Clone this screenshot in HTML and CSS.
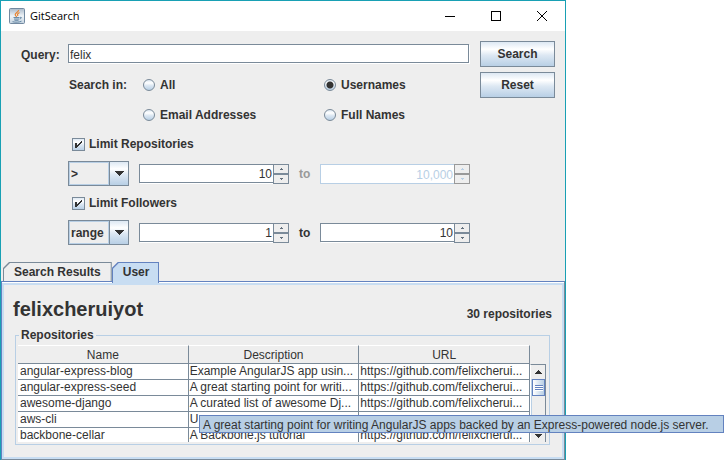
FILE: index.html
```html
<!DOCTYPE html>
<html lang="en">
<head>
<meta charset="utf-8">
<title>GitSearch</title>
<link rel="stylesheet" href="styles.css">
</head>
<body>
<svg class="defs" aria-hidden="true">
  <defs>
    <symbol id="down" viewBox="0 0 10 5"><path d="M0 0h10L5 5z"/></symbol>
    <symbol id="up" viewBox="0 0 8 4"><path d="M0 4h8L4 0z"/></symbol>
    <symbol id="step-up" viewBox="0 0 3 2"><path d="M0 1h3v1H0zM1 0h1v1H1z"/></symbol>
    <symbol id="step-down" viewBox="0 0 3 2"><path d="M0 0h3v1H0zM1 1h1v1H1z"/></symbol>
    <symbol id="tick" viewBox="0 0 13 13"><path d="M3 5h2v5H3zM5 7h1v2H5zM6 6h1v2H6zM7 5h1v2H7zM8 4h1v2H8zM9 3h1v2H9z"/></symbol>
  </defs>
</svg>
<main class="window">
  <header class="titlebar">
    <svg class="app-icon" viewBox="0 0 16 16" aria-hidden="true">
      <defs><linearGradient id="tile" x2="0" y2="1"><stop offset="0" stop-color="#a9b9c9"/><stop offset=".5" stop-color="#eef3f7"/><stop offset="1" stop-color="#c3d2df"/></linearGradient></defs>
      <rect x=".5" y=".5" width="15" height="15" rx="1" fill="url(#tile)" stroke="#7289a0"/>
      <path d="M9.500 2C10 4 6 5 6.200 6.800 6.300 7.800 7.500 8 7.500 9M10.500 4.500C8.500 5.500 8 6.500 9 8" fill="none" stroke="#e8822d" stroke-width="1.200"/>
      <path d="M4.500 9.500h6M11 9.500c2-.8 2 1-.5 1.500M5 11h5M5.500 12.300h4M3.500 13.700c3 .8 7 .5 9-.5" fill="none" stroke="#4b7396" stroke-width=".8"/>
    </svg>
    <h1 class="title">GitSearch</h1>
    <button class="win-btn" aria-label="Minimize"><svg width="10" height="10" viewBox="0 0 10 10"><path d="M0 5.500h10"/></svg></button>
    <button class="win-btn" aria-label="Maximize"><svg width="10" height="10" viewBox="0 0 10 10"><path d="M.5.5h9v9h-9z"/></svg></button>
    <button class="win-btn" aria-label="Close"><svg width="10" height="10" viewBox="0 0 10 10"><path d="M0 0l10 10M10 0L0 10"/></svg></button>
  </header>

  <form class="form">
    <label class="query-label" for="query">Query:</label>
    <div class="fields">
      <input class="text query" id="query" type="text" value="felix">
      <div class="scope" role="radiogroup" aria-labelledby="scope-label">
        <span class="scope-label" id="scope-label">Search in:</span>
        <label class="option"><input type="radio" name="scope">All</label>
        <label class="option"><input type="radio" name="scope" checked>Usernames</label>
        <label class="option second"><input type="radio" name="scope">Email Addresses</label>
        <label class="option"><input type="radio" name="scope">Full Names</label>
      </div>
      <label class="limit"><span class="check"><input type="checkbox" checked><svg><use href="#tick"/></svg></span>Limit Repositories</label>
      <div class="range">
        <span class="combo"><select aria-label="Repository comparison"><option>&gt;</option><option>range</option></select><span class="combo-btn"><svg width="10" height="5"><use href="#down"/></svg></span></span>
        <span class="spinner"><input class="text" type="text" value="10" aria-label="Repositories from"><button type="button" aria-label="Increase"><svg width="3" height="2"><use href="#step-up"/></svg></button><button type="button" aria-label="Decrease"><svg width="3" height="2"><use href="#step-down"/></svg></button></span>
        <span class="to off">to</span>
        <span class="spinner off"><input class="text" type="text" value="10,000" aria-label="Repositories to" disabled><button type="button" aria-label="Increase" disabled><svg width="3" height="2"><use href="#step-up"/></svg></button><button type="button" aria-label="Decrease" disabled><svg width="3" height="2"><use href="#step-down"/></svg></button></span>
      </div>
      <label class="limit"><span class="check"><input type="checkbox" checked><svg><use href="#tick"/></svg></span>Limit Followers</label>
      <div class="range">
        <span class="combo"><select aria-label="Follower comparison"><option>range</option><option>&gt;</option></select><span class="combo-btn"><svg width="10" height="5"><use href="#down"/></svg></span></span>
        <span class="spinner"><input class="text" type="text" value="1" aria-label="Followers from"><button type="button" aria-label="Increase"><svg width="3" height="2"><use href="#step-up"/></svg></button><button type="button" aria-label="Decrease"><svg width="3" height="2"><use href="#step-down"/></svg></button></span>
        <span class="to">to</span>
        <span class="spinner"><input class="text" type="text" value="10" aria-label="Followers to"><button type="button" aria-label="Increase"><svg width="3" height="2"><use href="#step-up"/></svg></button><button type="button" aria-label="Decrease"><svg width="3" height="2"><use href="#step-down"/></svg></button></span>
      </div>
    </div>
    <div class="actions">
      <button class="push" type="button">Search</button>
      <button class="push" type="reset">Reset</button>
    </div>
  </form>

  <div class="tabs" role="tablist">
    <button class="tab" role="tab" aria-selected="false">Search Results</button>
    <button class="tab active" role="tab" aria-selected="true">User</button>
  </div>
  <section class="panel" role="tabpanel">
    <div class="user">
      <h2 class="name">felixcheruiyot</h2>
      <span class="count">30 repositories</span>
    </div>
    <fieldset class="repos">
      <legend>Repositories</legend>
      <div class="scroll">
        <table>
          <thead><tr><th>Name</th><th>Description</th><th>URL</th></tr></thead>
          <tbody>
            <tr><td>angular-express-blog</td><td>Example AngularJS app usin...</td><td>https://github.com/felixcherui...</td></tr>
            <tr><td>angular-express-seed</td><td>A great starting point for writi...</td><td>https://github.com/felixcherui...</td></tr>
            <tr><td>awesome-django</td><td>A curated list of awesome Dj...</td><td>https://github.com/felixcherui...</td></tr>
            <tr><td>aws-cli</td><td>U</td><td></td></tr>
            <tr><td>backbone-cellar</td><td>A Backbone.js tutorial</td><td>https://github.com/felixcherui...</td></tr>
          </tbody>
        </table>
        <div class="scrollbar">
          <button class="arrow" aria-label="Scroll up"><svg width="8" height="4"><use href="#up"/></svg></button>
          <div class="track"><div class="thumb"></div></div>
          <button class="arrow" aria-label="Scroll down"><svg width="8" height="4"><use href="#down"/></svg></button>
        </div>
      </div>
    </fieldset>
  </section>
</main>
<div class="tooltip" role="tooltip">A great starting point for writing AngularJS apps backed by an Express-powered node.js server.</div>
</body>
</html>
```
FILE: styles.css
```css
* { box-sizing: border-box; }

:root {
  --line: #7a8a99;
  --pale: #b8cfe5;
  --blue: #6382bf;
  --selected: #c8ddf2;
  --face: #eeeeee;
  --ink: #333333;
  --metal: linear-gradient(#dde8f3 0%, #ffffff 30%, #dde8f3 55%, #b8cfe5 100%);
}

body {
  margin: 0;
  padding-right: 158px;
  position: relative;
  overflow: hidden;
  background: #ffffff;
  color: var(--ink);
  font: bold 12px/16px "Liberation Sans", Arial, sans-serif;
}

button, input, select { margin: 0; padding: 0; color: inherit; font: inherit; }
svg { display: block; fill: currentColor; shape-rendering: crispEdges; }
.defs { position: absolute; width: 0; height: 0; }

.window {
  background: var(--face);
  border: 1px solid #18a0b4;
  border-bottom: 0;
}

.titlebar {
  display: flex;
  align-items: center;
  height: 30px;
  padding-left: 8px;
  background: #ffffff;
}
.app-icon { width: 16px; height: 16px; shape-rendering: auto; }
.title {
  flex: 1;
  margin: 0 0 0 5px;
  color: #000000;
  font: 11px/16px "Open Sans", "Noto Sans", sans-serif;
}
.win-btn {
  display: flex;
  align-items: center;
  justify-content: center;
  width: 46px;
  height: 30px;
  border: 0;
  background: none;
}
.win-btn svg { fill: none; stroke: #000000; }

.form {
  display: grid;
  grid-template-columns: 37px 1fr 75px;
  column-gap: 10px;
  padding: 10px 10px 17px 20px;
}
.query-label { padding-top: 6px; }
.fields { padding-top: 3px; }

.text {
  appearance: none;
  min-width: 0;
  padding: 2px 1px 0;
  border: 1px solid var(--line);
  border-radius: 0;
  background: #ffffff;
  box-shadow: 1px 1px 0 #ffffff;
  font-weight: normal;
  outline: 0;
}
.query { display: block; width: calc(100% - 1px); height: 19px; }

.scope {
  display: grid;
  grid-template-columns: 75px 181px 1fr;
  row-gap: 14px;
  margin: 14px 0 13px;
}
.scope-label { padding-left: 1px; }
.second { grid-column: 2; }
.option, .limit { display: flex; align-items: center; gap: 5px; }
.option input {
  appearance: none;
  width: 12px;
  height: 12px;
  border: 1px solid var(--line);
  border-radius: 50%;
  background: var(--metal);
}
.option input:checked {
  background: radial-gradient(circle, var(--ink) 3px, transparent 4px), var(--metal);
}
.limit { gap: 4px; padding-left: 4px; }
.check { display: grid; }
.check > * { grid-area: 1 / 1; width: 13px; height: 13px; }
.check input { appearance: none; border: 1px solid var(--line); background: var(--metal); }
.check svg { z-index: 1; pointer-events: none; }

.range {
  display: grid;
  grid-template-columns: 61px 1fr 11px 1fr;
  gap: 10px;
  align-items: center;
  margin: 9px 0;
}
.range:last-child { margin-bottom: 0; }

.combo {
  display: grid;
  grid-template-columns: 1fr 19px;
  height: 25px;
  border: 1px solid var(--line);
}
.combo select {
  grid-area: 1 / 1 / 2 / 3;
  appearance: none;
  padding-left: 1px;
  border: 1px solid var(--pale);
  border-radius: 0;
  background: var(--face);
  outline: 0;
}
.combo-btn {
  display: flex;
  align-items: center;
  justify-content: center;
  grid-area: 1 / 2;
  border-left: 1px solid var(--line);
  background: var(--metal);
  box-shadow: -1px 0 0 var(--pale);
  pointer-events: none;
}

.spinner {
  display: grid;
  grid-template: 10px 10px / 1fr 16px;
}
.spinner .text {
  grid-row: 1 / 3;
  height: 19px;
  border-right: 0;
  text-align: right;
}
.spinner button {
  display: flex;
  align-items: center;
  justify-content: center;
  border: 1px solid var(--line);
  background: var(--face);
  color: #63707d;
}
.off { color: #999999; }
.spinner.off .text { height: 20px; border-color: var(--pale); box-shadow: none; color: var(--pale); }
.spinner.off button { border-color: #999999; color: var(--pale); }

.actions { display: flex; flex-direction: column; gap: 5px; }
.push {
  height: 26px;
  border: 1px solid var(--line);
  background: var(--metal);
}

.tabs { display: flex; height: 19px; padding-left: 2px; }
.tab {
  position: relative;
  z-index: 0;
  height: 19px;
  padding: 0 11px;
  border: 0;
  background: var(--line);
  clip-path: polygon(6px 0, 100% 0, 100% 100%, 0 100%, 0 6px);
}
.tab::before {
  content: "";
  position: absolute;
  inset: 1px 1px 0;
  z-index: -1;
  background: var(--face);
  clip-path: polygon(6px 0, 100% 0, 100% 100%, 0 100%, 0 6px);
}
.active { z-index: 1; height: 21px; padding: 0 10px 2px 11px; background: var(--blue); }
.active::before { background: var(--selected); }

.panel {
  padding: 11px 12px 14px 11px;
  border: 1px solid var(--line);
  border-top-color: var(--blue);
  border-left-color: var(--blue);
  box-shadow: inset 0 1px 0 #ffffff, inset 0 3px 0 var(--selected), inset 0 0 0 2px var(--selected);
}
.user { display: flex; align-items: flex-start; justify-content: space-between; height: 34px; }
.name { margin: 0; padding-top: 4px; font-size: 20px; line-height: 24px; }
.count { padding-top: 13px; }

.repos {
  min-width: 0;
  margin: 0 2px;
  padding: 2px 3px 2px 2px;
  border: 1px solid var(--pale);
}
.repos legend { margin-left: 1px; padding: 0 2px; }
.scroll { display: grid; grid-template-columns: 1fr 16px; height: 97px; overflow: hidden; }
table { width: 100%; border-spacing: 0; table-layout: fixed; font-weight: normal; }
th { height: 19px; padding: 0; border-top: 1px solid #ffffff; font-weight: normal; }
th, td { border-right: 1px solid var(--line); border-bottom: 1px solid var(--line); }
td {
  height: 16px;
  padding: 0 1px;
  overflow: hidden;
  background: #ffffff;
  line-height: 15px;
  white-space: nowrap;
}
td:first-child { padding-left: 2px; }
.scrollbar { display: flex; flex-direction: column; margin-top: 19px; border: 1px solid var(--line); border-left-color: #ffffff; }
.arrow {
  display: flex;
  align-items: center;
  justify-content: center;
  height: 14px;
  border: 0;
  background: var(--face);
}
.track { flex: 1; border-left: 1px solid var(--pale); }
.thumb {
  height: 17px;
  border: 1px solid var(--blue);
  background:
    repeating-linear-gradient(var(--blue) 0 1px, #ffffff 1px 2px) center / 8px 6px no-repeat,
    linear-gradient(90deg, #ffffff, var(--pale));
}

.tooltip {
  position: absolute;
  z-index: 2;
  top: 415px;
  left: 199px;
  right: 0;
  height: 18px;
  padding: 1px 3px;
  border: 1px solid var(--blue);
  background: var(--pale);
  font-weight: normal;
  line-height: 16px;
  white-space: nowrap;
}
```
